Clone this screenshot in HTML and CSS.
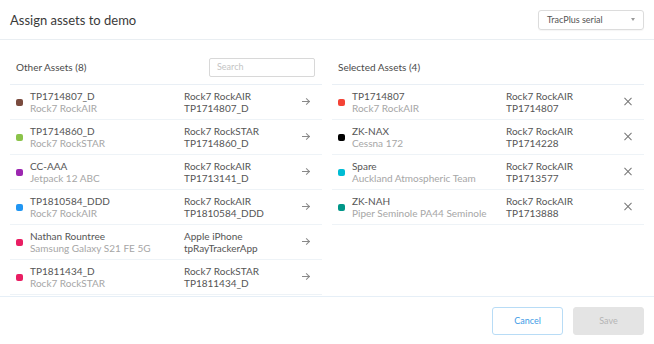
FILE: index.html
```html
<!DOCTYPE html>
<html>
<head>
    <meta charset="utf-8" />
    <title>Assign assets</title>
    <link rel="stylesheet" href="styles.css">
</head>
<body>
    <div class="modal">
        <div class="head">
            <h1>Assign assets to demo</h1>
            <div class="select">TracPlus serial<span class="caret"></span></div>
        </div>

        <div class="panels">
            <div class="panel">
                <div class="panel-head">
                    <span>Other Assets (8)</span>
                    <div class="search">Search</div>
                </div>
                <ul class="list">
                    <li><i style="background:#7a4b3e"></i><div class="name">TP1714807_D<em>Rock7 RockAIR</em></div><div class="dev">Rock7 RockAIR<br />TP1714807_D</div><span class="act arrow"></span></li>
                    <li><i style="background:#8bc34a"></i><div class="name">TP1714860_D<em>Rock7 RockSTAR</em></div><div class="dev">Rock7 RockSTAR<br />TP1714860_D</div><span class="act arrow"></span></li>
                    <li><i style="background:#9c27b0"></i><div class="name">CC-AAA<em>Jetpack 12 ABC</em></div><div class="dev">Rock7 RockAIR<br />TP1713141_D</div><span class="act arrow"></span></li>
                    <li><i style="background:#2196f3"></i><div class="name">TP1810584_DDD<em>Rock7 RockAIR</em></div><div class="dev">Rock7 RockAIR<br />TP1810584_DDD</div><span class="act arrow"></span></li>
                    <li><i style="background:#e91e63"></i><div class="name">Nathan Rountree<em>Samsung Galaxy S21 FE 5G</em></div><div class="dev">Apple iPhone<br />tpRayTrackerApp</div><span class="act arrow"></span></li>
                    <li><i style="background:#e91e63"></i><div class="name">TP1811434_D<em>Rock7 RockSTAR</em></div><div class="dev">Rock7 RockSTAR<br />TP1811434_D</div><span class="act arrow"></span></li>
                </ul>
            </div>

            <div class="panel">
                <div class="panel-head">
                    <span>Selected Assets (4)</span>
                </div>
                <ul class="list">
                    <li><i style="background:#f44336"></i><div class="name">TP1714807<em>Rock7 RockAIR</em></div><div class="dev">Rock7 RockAIR<br />TP1714807</div><span class="act close"></span></li>
                    <li><i style="background:#000"></i><div class="name">ZK-NAX<em>Cessna 172</em></div><div class="dev">Rock7 RockAIR<br />TP1714228</div><span class="act close"></span></li>
                    <li><i style="background:#00bcd4"></i><div class="name">Spare<em>Auckland Atmospheric Team</em></div><div class="dev">Rock7 RockAIR<br />TP1713577</div><span class="act close"></span></li>
                    <li><i style="background:#009688"></i><div class="name">ZK-NAH<em>Piper Seminole PA44 Seminole</em></div><div class="dev">Rock7 RockAIR<br />TP1713888</div><span class="act close"></span></li>
                </ul>
            </div>
        </div>

        <div class="foot">
            <button class="btn cancel">Cancel</button>
            <button class="btn save">Save</button>
        </div>
    </div>
</body>
</html>
```

FILE: styles.css
```css
body,
div,
ul,
li,
h1
{
    margin: 0;
    padding: 0;
}

ul
{
    list-style-type: none;
}

body
{
    background: #fff;
    font: 10px/12px Lato, "Liberation Sans", sans-serif;
    color: #555;
}

.modal
{
    width: 654px;
    height: 344px;
    display: flex;
    flex-direction: column;
}

.head
{
    height: 39px;
    border-bottom: 1px solid #e9eef2;
    padding: 0 10px;
    display: flex;
    align-items: center;
    justify-content: space-between;
}

    .head h1
    {
        font-size: 13px;
        font-weight: 400;
        color: #3a3a3a;
    }

    .head .select
    {
        width: 88px;
        height: 18px;
        border: 1px solid #dcdcdc;
        border-radius: 3px;
        padding: 0 8px;
        display: flex;
        align-items: center;
        justify-content: space-between;
        font-size: 9px;
        color: #555;
        box-shadow: 0 1px 1px rgba(0,0,0,0.04);
    }

        .head .select .caret
        {
            width: 0;
            height: 0;
            border-left: 2px solid transparent;
            border-right: 2px solid transparent;
            border-top: 3px solid #999;
        }

.panels
{
    flex: 1;
    display: flex;
    gap: 10px;
    padding: 0 10px;
    overflow: hidden;
    border-bottom: 1px solid #e6eff7;
}

.panel
{
    width: 312px;
    display: flex;
    flex-direction: column;
}

    .panel-head
    {
        height: 34px;
        padding: 10px 7px 0 6px;
        border-bottom: 1px solid #e9eff5;
        display: flex;
        align-items: center;
        justify-content: space-between;
        color: #4a4a4a;
    }

    .panel-head .search
    {
        width: 97px;
        height: 17px;
        border: 1px solid #d8d8d8;
        border-radius: 2px;
        padding-left: 7px;
        display: flex;
        align-items: center;
        font-size: 9px;
        color: #c4c4c4;
    }

    .list
    {
        flex: 1;
        overflow: hidden;
    }

        .list li
        {
            height: 34px;
            border-bottom: 1px solid #eef3f7;
            padding: 0 12px 0 6px;
            display: flex;
            align-items: center;
        }

            .list li i
            {
                width: 7px;
                height: 7px;
                border-radius: 2px;
                margin-right: 7px;
                flex: none;
            }

            .list li .name
            {
                width: 154px;
            }

                .list li .name em
                {
                    display: block;
                    font-style: normal;
                    color: #a6a6a6;
                }

            .list li .dev
            {
                flex: 1;
            }

            .list li .act
            {
                width: 8px;
                height: 8px;
                position: relative;
            }

            .arrow::before
            {
                content: "";
                position: absolute;
                left: 0;
                top: 3px;
                width: 8px;
                height: 1px;
                background: #888;
            }

            .arrow::after
            {
                content: "";
                position: absolute;
                right: 1px;
                top: 1px;
                width: 4px;
                height: 4px;
                border-top: 1px solid #888;
                border-right: 1px solid #888;
                transform: rotate(45deg);
            }

            .close::before,
            .close::after
            {
                content: "";
                position: absolute;
                left: -1px;
                top: 3px;
                width: 10px;
                height: 1px;
                background: #777;
                transform: rotate(45deg);
            }

            .close::after
            {
                transform: rotate(-45deg);
            }

.foot
{
    height: 47px;
    padding: 0 10px;
    display: flex;
    align-items: center;
    justify-content: flex-end;
    gap: 10px;
}

    .foot .btn
    {
        width: 71px;
        height: 28px;
        border-radius: 3px;
        font: 9px Lato, "Liberation Sans", sans-serif;
        cursor: pointer;
    }

    .foot .cancel
    {
        background: #fff;
        border: 1px solid #b8dcf6;
        color: #3d9be6;
    }

    .foot .save
    {
        background: #e4e4e4;
        border: 1px solid #e4e4e4;
        color: #b5b5b5;
    }
```
